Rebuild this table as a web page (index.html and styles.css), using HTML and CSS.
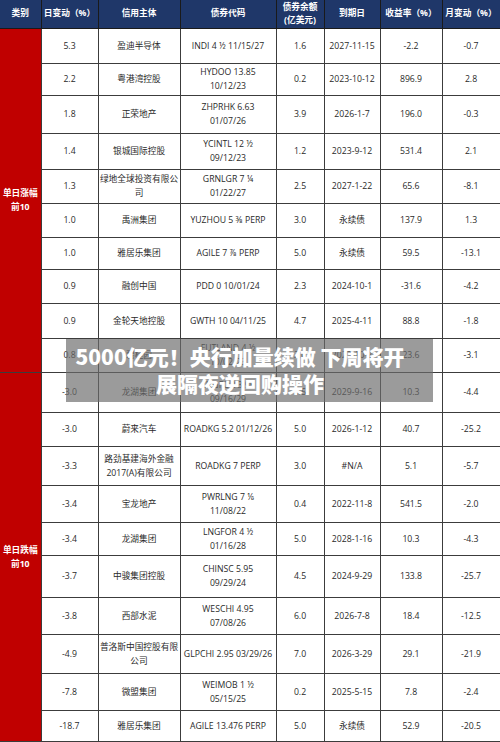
FILE: index.html
```html
<!DOCTYPE html>
<html lang="zh-CN">
<head>
<meta charset="utf-8">
<title>单日涨跌幅前10</title>
<link rel="stylesheet" href="styles.css">
</head>
<body>
<div class="page">
<table class="bonds">
<colgroup>
<col class="c-cat"><col class="c-day"><col class="c-name"><col class="c-code"><col class="c-amt"><col class="c-mat"><col class="c-yld"><col class="c-mon">
</colgroup>
<thead>
<tr>
<th>类别</th><th>日变动（%）</th><th>信用主体</th><th>债券代码</th><th>债券余额<br>(亿美元)</th><th>到期日</th><th>收益率（%）</th><th>月变动（%）</th>
</tr>
</thead>
<tbody>
<tr><td class="cat" rowspan="10">单日涨幅<br>前10</td><td>5.3</td><td>盈迪半导体</td><td>INDI 4 ½ 11/15/27</td><td>1.6</td><td>2027-11-15</td><td>-2.2</td><td>-0.7</td></tr>
<tr><td>2.2</td><td>粤港湾控股</td><td>HYDOO 13.85<br>10/12/23</td><td>0.2</td><td>2023-10-12</td><td>896.9</td><td>2.8</td></tr>
<tr><td>1.8</td><td>正荣地产</td><td>ZHPRHK 6.63<br>01/07/26</td><td>3.9</td><td>2026-1-7</td><td>196.0</td><td>-0.3</td></tr>
<tr><td>1.4</td><td>银城国际控股</td><td>YCINTL 12 ½<br>09/12/23</td><td>1.2</td><td>2023-9-12</td><td>531.4</td><td>2.1</td></tr>
<tr><td>1.3</td><td>绿地全球投资有限公<br>司</td><td>GRNLGR 7 ¼<br>01/22/27</td><td>2.5</td><td>2027-1-22</td><td>65.6</td><td>-8.1</td></tr>
<tr><td>1.0</td><td>禹洲集团</td><td>YUZHOU 5 ⅜ PERP</td><td>3.0</td><td>永续债</td><td>137.9</td><td>1.3</td></tr>
<tr><td>1.0</td><td>雅居乐集团</td><td>AGILE 7 ⅞ PERP</td><td>5.0</td><td>永续债</td><td>59.5</td><td>-13.1</td></tr>
<tr><td>0.9</td><td>融创中国</td><td>PDD 0 10/01/24</td><td>2.3</td><td>2024-10-1</td><td>-31.6</td><td>-4.2</td></tr>
<tr><td>0.9</td><td>金轮天地控股</td><td>GWTH 10 04/11/25</td><td>4.7</td><td>2025-4-11</td><td>88.8</td><td>-1.8</td></tr>
<tr><td>0.8</td><td>碧桂园</td><td>FUTLAND 4 ½<br>10/02/23</td><td>2.0</td><td>2023-10-2</td><td>23.6</td><td>-3.1</td></tr>
<tr><td class="cat" rowspan="10">单日跌幅<br>前10</td><td>-3.0</td><td>龙湖集团</td><td>LNGFOR 3.95<br>09/16/29</td><td>3.5</td><td>2029-9-16</td><td>10.3</td><td>-4.4</td></tr>
<tr><td>-3.0</td><td>蔚来汽车</td><td>ROADKG 5.2 01/12/26</td><td>5.0</td><td>2026-1-12</td><td>40.7</td><td>-25.2</td></tr>
<tr><td>-3.3</td><td>路劲基建海外金融<br>2017(A)有限公司</td><td>ROADKG 7 PERP</td><td>3.0</td><td>#N/A</td><td>5.1</td><td>-5.7</td></tr>
<tr><td>-3.4</td><td>宝龙地产</td><td>PWRLNG 7 ⅛<br>11/08/22</td><td>0.4</td><td>2022-11-8</td><td>541.5</td><td>-2.0</td></tr>
<tr><td>-3.4</td><td>龙湖集团</td><td>LNGFOR 4 ½<br>01/16/28</td><td>5.0</td><td>2028-1-16</td><td>10.3</td><td>-4.3</td></tr>
<tr><td>-3.7</td><td>中骏集团控股</td><td>CHINSC 5.95<br>09/29/24</td><td>4.5</td><td>2024-9-29</td><td>133.8</td><td>-25.7</td></tr>
<tr><td>-3.8</td><td>西部水泥</td><td>WESCHI 4.95<br>07/08/26</td><td>6.0</td><td>2026-7-8</td><td>18.4</td><td>-12.5</td></tr>
<tr><td>-4.9</td><td>普洛斯中国控股有限<br>公司</td><td>GLPCHI 2.95 03/29/26</td><td>7.0</td><td>2026-3-29</td><td>29.1</td><td>-21.9</td></tr>
<tr><td>-7.8</td><td>微盟集团</td><td>WEIMOB 1 ½<br>05/15/25</td><td>0.2</td><td>2025-5-15</td><td>7.8</td><td>-2.4</td></tr>
<tr><td>-18.7</td><td>雅居乐集团</td><td>AGILE 13.476 PERP</td><td>5.0</td><td>永续债</td><td>52.9</td><td>-20.5</td></tr>
</tbody>
</table>
<div class="headline">5000亿元！央行加量续做 下周将开<br>展隔夜逆回购操作</div>
</div>
</body>
</html>
```
FILE: styles.css
```css
html, body {
  margin: 0;
  padding: 0;
  background: #ffffff;
}
.page {
  position: relative;
  width: 500px;
  height: 742px;
  overflow: hidden;
}
.bonds {
  width: 500px;
  border-collapse: collapse;
  table-layout: fixed;
  font-family: "Open Sans", "Noto Sans CJK SC", sans-serif;
  font-size: 8.7px;
  color: #2a2a2a;
}
.c-cat { width: 41px; }
.c-day { width: 57px; }
.c-name { width: 82px; }
.c-code { width: 96px; }
.c-amt { width: 48px; }
.c-mat { width: 56px; }
.c-yld { width: 62px; }
.c-mon { width: 58px; }
.bonds th, .bonds td {
  border: 1px solid #3c3c3c;
  padding: 0 1px;
  text-align: center;
  vertical-align: middle;
  white-space: nowrap;
  line-height: 14px;
  overflow: hidden;
}
.bonds thead tr { height: 28px; }
.bonds th {
  background: #1f3769;
  color: #ffffff;
  font-weight: bold;
  line-height: 13px;
  border-top: none;
  border-color: #1a1a1a;
}
.bonds td.cat {
  background: #c00000;
  color: #ffffff;
  font-weight: bold;
  border-left: none;
}
.bonds th:first-child { border-left: none; }
.bonds tbody tr:nth-child(1) { height: 35px; }
.bonds tbody tr:nth-child(2) { height: 32px; }
.bonds tbody tr:nth-child(3) { height: 38px; }
.bonds tbody tr:nth-child(4) { height: 36px; }
.bonds tbody tr:nth-child(5) { height: 34px; }
.bonds tbody tr:nth-child(6) { height: 34px; }
.bonds tbody tr:nth-child(7) { height: 32px; }
.bonds tbody tr:nth-child(8) { height: 34px; }
.bonds tbody tr:nth-child(9) { height: 35px; }
.bonds tbody tr:nth-child(10) { height: 34px; }
.bonds tbody tr:nth-child(11) { height: 40px; }
.bonds tbody tr:nth-child(12) { height: 34px; }
.bonds tbody tr:nth-child(13) { height: 39px; }
.bonds tbody tr:nth-child(14) { height: 37px; }
.bonds tbody tr:nth-child(15) { height: 33px; }
.bonds tbody tr:nth-child(16) { height: 42px; }
.bonds tbody tr:nth-child(17) { height: 37px; }
.bonds tbody tr:nth-child(18) { height: 39px; }
.bonds tbody tr:nth-child(19) { height: 37px; }
.bonds tbody tr:nth-child(20) { height: 31px; }
.headline {
  position: absolute;
  left: 66px;
  top: 339px;
  width: 367px;
  height: 63px;
  padding: 4px 19px 0 0;
  box-sizing: border-box;
  background: rgba(108, 108, 108, 0.68);
  color: #ffffff;
  font-family: "Noto Sans CJK SC", "Noto Sans", sans-serif;
  font-weight: 900;
  font-size: 21px;
  line-height: 27px;
  text-align: center;
  white-space: nowrap;
}
```
